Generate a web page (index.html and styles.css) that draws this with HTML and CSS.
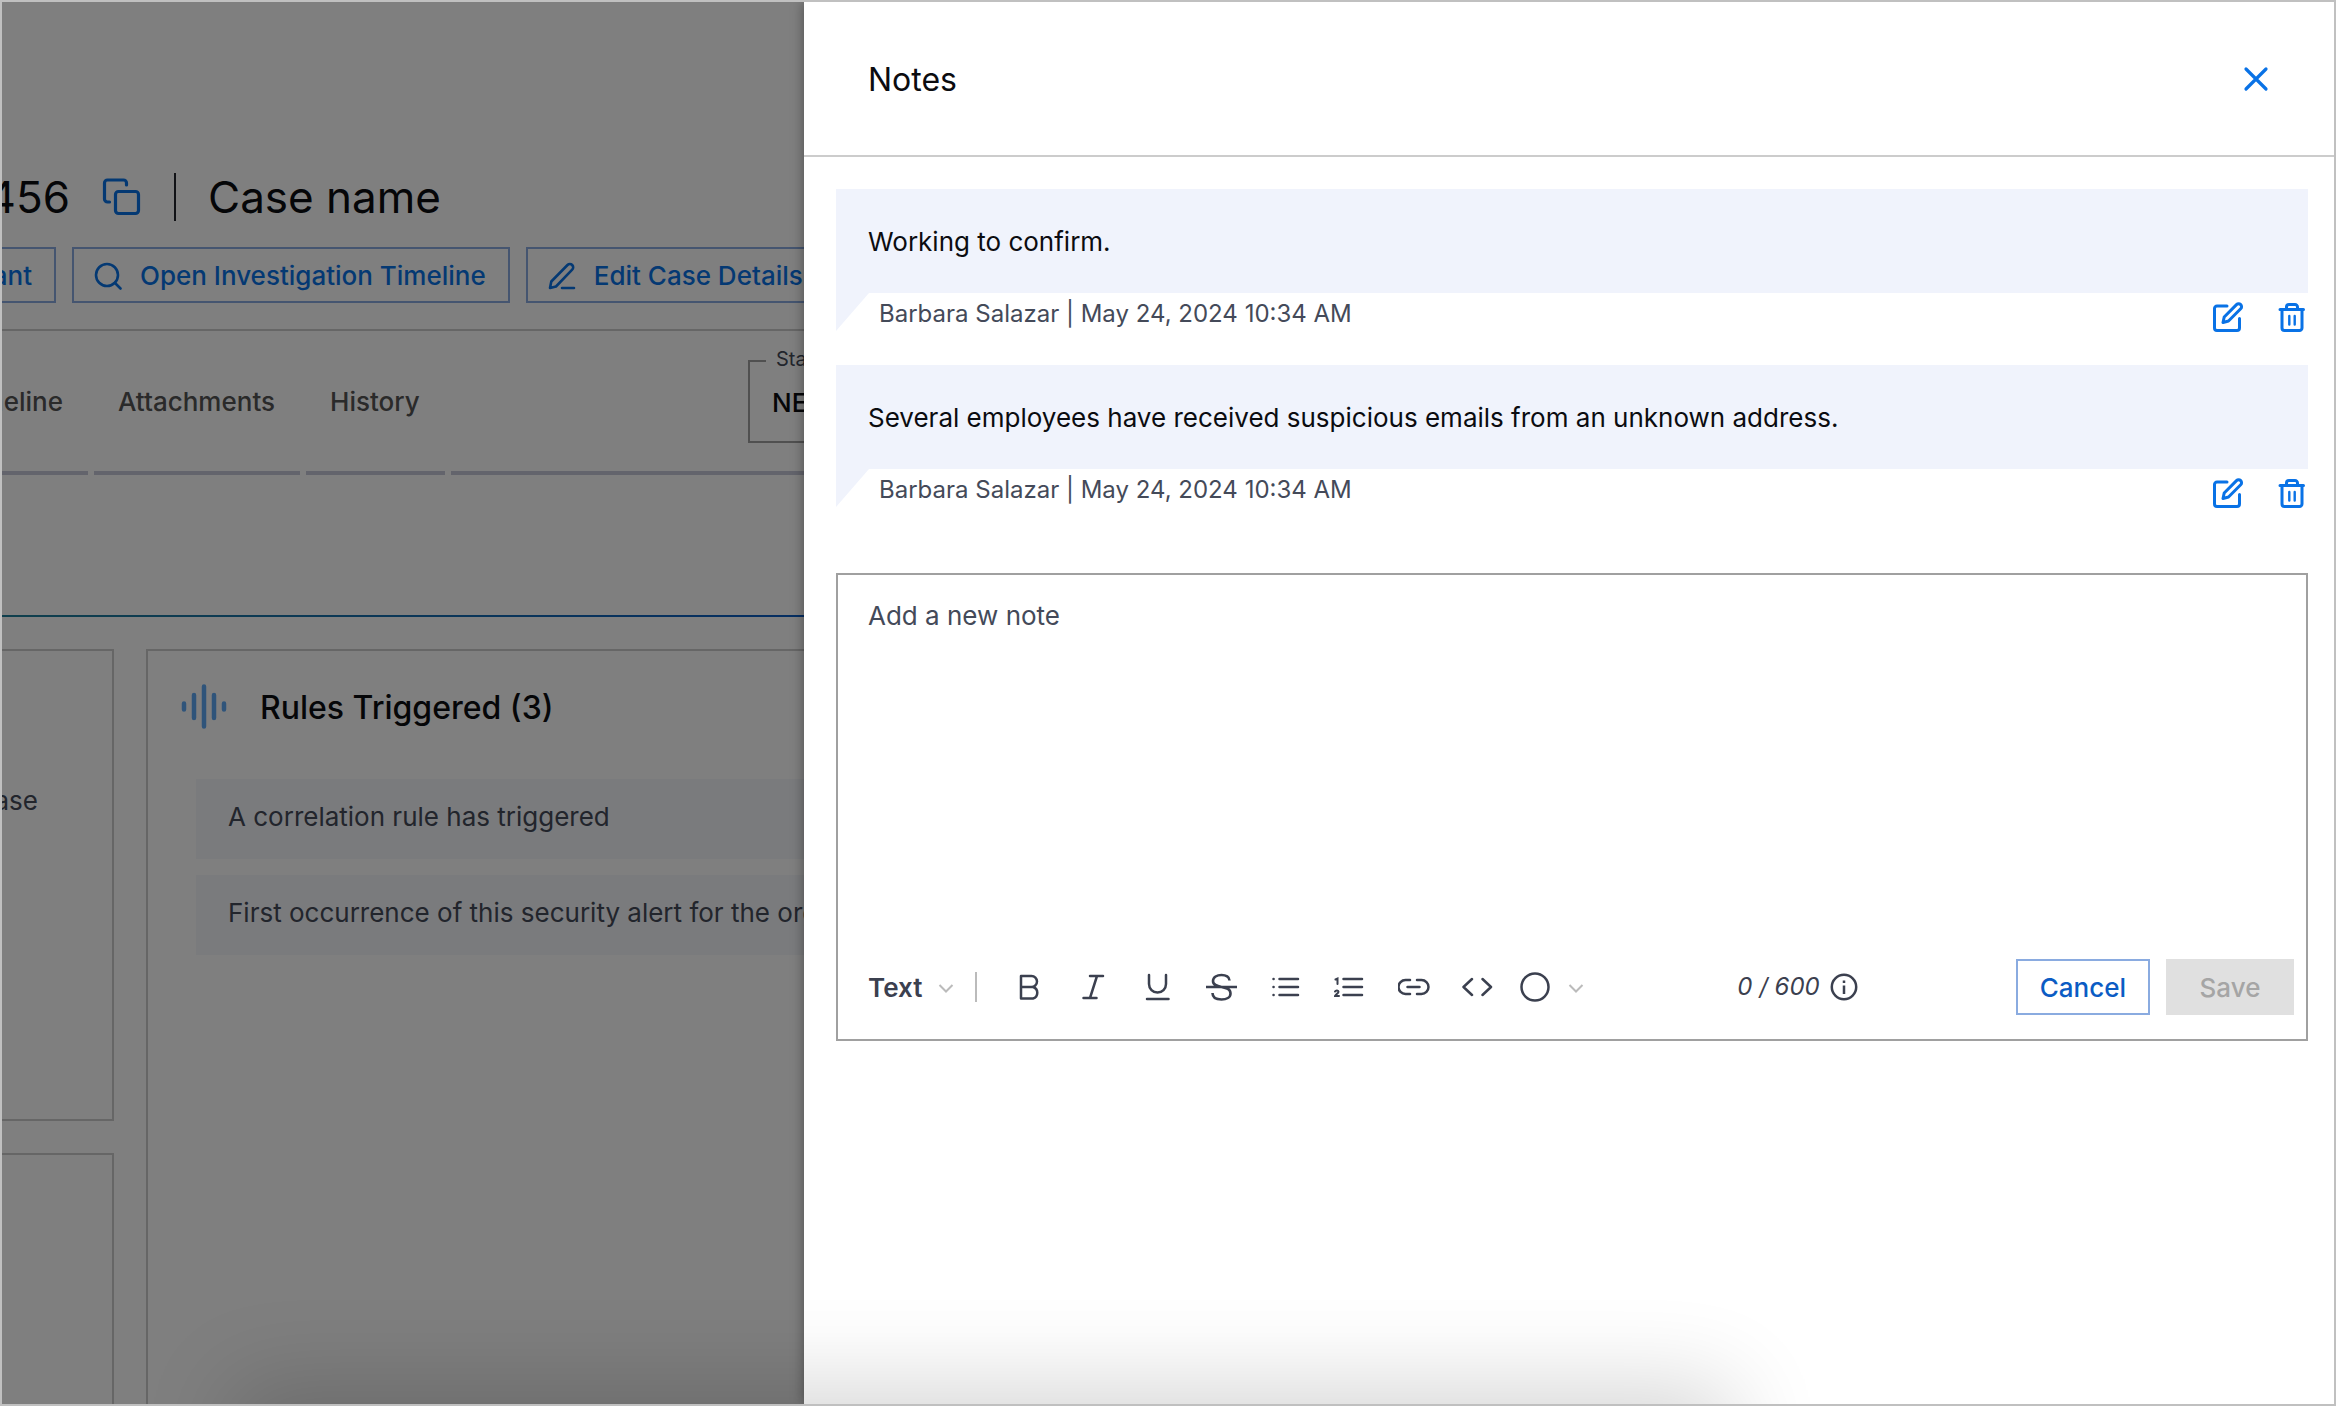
FILE: index.html
```html
<!DOCTYPE html>
<html lang="en">
<head>
<meta charset="utf-8">
<title>Case notes</title>
<link rel="stylesheet" href="styles.css">
</head>
<body>
<div class="window">
  <main class="case">
    <header class="case-header">
      <div class="case-title">
        <span class="case-id">456</span>
        <button class="icon-button" type="button" aria-label="Copy case ID">
          <svg width="40" height="40" viewBox="0 0 40 40" fill="none" stroke="currentColor" stroke-width="3.200" stroke-linecap="round" stroke-linejoin="round"><rect x="14.500" y="14.500" width="23" height="22" rx="3"/><path d="M8.500 25H6.500a3 3 0 0 1-3-3V6a3 3 0 0 1 3-3h16a3 3 0 0 1 3 3v2"/></svg>
        </button>
        <span class="title-rule"></span>
        <h1 class="case-name">Case name</h1>
      </div>
      <div class="case-actions">
        <button class="outline-button clipped-start" type="button">Assistant</button>
        <button class="outline-button" type="button">
          <svg width="28" height="28" viewBox="0 0 28 28" fill="none" stroke="currentColor" stroke-width="2.600" stroke-linecap="round"><circle cx="13" cy="13" r="11"/><path d="M21 21l5.500 5.500"/></svg>
          Open Investigation Timeline
        </button>
        <button class="outline-button" type="button">
          <svg width="28" height="28" viewBox="0 0 28 28" fill="none" stroke="currentColor" stroke-width="2.600" stroke-linecap="round" stroke-linejoin="round"><path d="M2 26l1.300-6.500L19.500 3a3.300 3.300 0 0 1 4.700 4.700L8 24.500zM14 26h12"/></svg>
          Edit Case Details
        </button>
      </div>
    </header>
    <div class="tab-row">
      <nav class="tabs">
        <a class="tab clipped-start" href="#timeline">Timeline</a>
        <a class="tab" href="#attachments">Attachments</a>
        <a class="tab" href="#history">History</a>
        <span class="tab-filler"></span>
      </nav>
      <fieldset class="status">
        <legend class="status-label">Status</legend>
        <button class="status-value" type="button">NEW</button>
      </fieldset>
    </div>
    <div class="section-line"></div>
    <div class="cards">
      <div class="side-cards">
        <section class="card side-card"><p class="side-text">Case</p></section>
        <section class="card side-card last"></section>
      </div>
      <section class="card rules">
        <h2 class="rules-title">
          <svg class="wave" width="48" height="48" viewBox="0 0 48 48" fill="none" stroke="currentColor" stroke-width="4.500" stroke-linecap="round"><path d="M4 20.500v6M14 12v23M24 3.500v40M34 12v23M44 20.500v6"/></svg>
          <span class="rules-name">Rules Triggered (3)</span>
        </h2>
        <ul class="rule-list">
          <li class="rule">A correlation rule has triggered</li>
          <li class="rule">First occurrence of this security alert for the organization</li>
        </ul>
      </section>
    </div>
  </main>
  <div class="backdrop"></div>
  <aside class="drawer" aria-label="Notes">
    <header class="drawer-header">
      <h2 class="drawer-title">Notes</h2>
      <button class="icon-button close" type="button" aria-label="Close">
        <svg width="28" height="28" viewBox="0 0 28 28" fill="none" stroke="currentColor" stroke-width="3.200" stroke-linecap="round"><path d="M4 4l20 20M24 4L4 24"/></svg>
      </button>
    </header>
    <div class="drawer-body">
      <article class="note">
        <p class="note-text">Working to confirm.</p>
        <footer class="note-footer">
          <span class="note-meta">Barbara Salazar | May 24, 2024 10:34 AM</span>
          <span class="note-actions">
            <button class="icon-button" type="button" aria-label="Edit note"><svg width="32" height="32" viewBox="0 0 32 32" fill="none" stroke="currentColor" stroke-width="3" stroke-linecap="round" stroke-linejoin="round"><path d="M15 5H5a2.500 2.500 0 0 0-2.500 2.500V27A2.500 2.500 0 0 0 5 29.500h20a2.500 2.500 0 0 0 2.500-2.500V17.500"/><path d="M11 21.500l1.200-5.500L24.500 3.600a2.900 2.900 0 0 1 4.200 4.200L16.500 20z"/></svg></button>
            <button class="icon-button" type="button" aria-label="Delete note"><svg width="32" height="32" viewBox="0 0 32 32" fill="none" stroke="currentColor" stroke-width="3" stroke-linecap="round" stroke-linejoin="round"><path d="M4 8.500h23.500M6 8.500V27A2.500 2.500 0 0 0 8.500 29.500h15a2.500 2.500 0 0 0 2.500-2.500V8.500M10.500 8V6a2.500 2.500 0 0 1 2.500-2.500h6A2.500 2.500 0 0 1 21.500 6v2"/><path stroke-width="2.400" d="M13.300 15v8.500M18.700 15v8.500"/></svg></button>
          </span>
        </footer>
      </article>
      <article class="note">
        <p class="note-text">Several employees have received suspicious emails from an unknown address.</p>
        <footer class="note-footer">
          <span class="note-meta">Barbara Salazar | May 24, 2024 10:34 AM</span>
          <span class="note-actions">
            <button class="icon-button" type="button" aria-label="Edit note"><svg width="32" height="32" viewBox="0 0 32 32" fill="none" stroke="currentColor" stroke-width="3" stroke-linecap="round" stroke-linejoin="round"><path d="M15 5H5a2.500 2.500 0 0 0-2.500 2.500V27A2.500 2.500 0 0 0 5 29.500h20a2.500 2.500 0 0 0 2.500-2.500V17.500"/><path d="M11 21.500l1.200-5.500L24.500 3.600a2.900 2.900 0 0 1 4.200 4.200L16.500 20z"/></svg></button>
            <button class="icon-button" type="button" aria-label="Delete note"><svg width="32" height="32" viewBox="0 0 32 32" fill="none" stroke="currentColor" stroke-width="3" stroke-linecap="round" stroke-linejoin="round"><path d="M4 8.500h23.500M6 8.500V27A2.500 2.500 0 0 0 8.500 29.500h15a2.500 2.500 0 0 0 2.500-2.500V8.500M10.500 8V6a2.500 2.500 0 0 1 2.500-2.500h6A2.500 2.500 0 0 1 21.500 6v2"/><path stroke-width="2.400" d="M13.300 15v8.500M18.700 15v8.500"/></svg></button>
          </span>
        </footer>
      </article>
      <form class="editor">
        <textarea class="editor-input" aria-label="New note" placeholder="Add a new note"></textarea>
        <div class="editor-bar">
          <button class="style-menu" type="button"><span class="style-name">Text</span>
            <svg class="chevron" width="16" height="16" viewBox="0 0 16 16" fill="none" stroke="currentColor" stroke-width="2"><path d="M1.500 6L8 12.500 14.500 6"/></svg>
          </button>
          <span class="bar-rule"></span>
          <div class="tools">
            <button class="tool" type="button" aria-label="Bold"><svg width="32" height="32" viewBox="0 0 32 32" fill="none" stroke="currentColor" stroke-width="2.500" stroke-linejoin="round"><path d="M7 5h10.500a5.500 5.500 0 0 1 0 11H7zM7 16h12a6 6 0 0 1 0 11.500H7z"/></svg></button>
            <button class="tool" type="button" aria-label="Italic"><svg width="32" height="32" viewBox="0 0 32 32" fill="none" stroke="currentColor" stroke-width="2.500" stroke-linecap="round"><path d="M12 5h13M5.500 27h13M19 5l-7 22"/></svg></button>
            <button class="tool" type="button" aria-label="Underline"><svg width="32" height="32" viewBox="0 0 32 32" fill="none" stroke="currentColor" stroke-width="2.500" stroke-linecap="round"><path d="M7 4v9a8.500 8.500 0 0 0 17 0V4M5 28h21.500"/></svg></button>
            <button class="tool" type="button" aria-label="Strikethrough"><svg width="32" height="32" viewBox="0 0 32 32" fill="none" stroke="currentColor" stroke-width="2.600"><path d="M0 16h31M23.500 9.500C23.500 6 20 4 15.500 4S7 6 7 10c0 4 3.500 5 8.500 6s9 2 9 6.500c0 4-4 6-9 6s-9-2-9-6.500"/></svg></button>
            <button class="tool" type="button" aria-label="Bulleted list"><svg width="32" height="32" viewBox="0 0 32 32" fill="none" stroke="currentColor" stroke-width="2.500" stroke-linecap="round"><path d="M9.500 8H28M9.500 16H28M9.500 24H28M3.500 8h.1M3.500 16h.1M3.500 24h.1"/></svg></button>
            <button class="tool" type="button" aria-label="Numbered list"><svg width="32" height="32" viewBox="0 0 32 32" fill="none" stroke="currentColor" stroke-width="2.500" stroke-linecap="round"><path d="M9.500 8H28M9.500 16H28M9.500 24H28"/><path stroke-width="2" d="M1.500 8.500L3.500 7.500V13M1 20.500c.8-1.500 3.500-1.500 3.500.3 0 1.500-2.500 2.500-3.500 4.200h4"/></svg></button>
            <button class="tool" type="button" aria-label="Link"><svg width="32" height="32" viewBox="0 0 32 32" fill="none" stroke="currentColor" stroke-width="2.500" stroke-linecap="round"><path d="M12 9H7.500a7 7 0 0 0 0 14H12M19 9h4.500a7 7 0 0 1 0 14H19M9.500 16h12"/></svg></button>
            <button class="tool" type="button" aria-label="Code"><svg width="32" height="32" viewBox="0 0 32 32" fill="none" stroke="currentColor" stroke-width="2.500" stroke-linecap="round" stroke-linejoin="round"><path d="M10 8l-8.500 8L10 24M20.500 8l8.500 8-8.500 8"/></svg></button>
          </div>
          <button class="color-menu" type="button" aria-label="Text color">
            <svg width="32" height="32" viewBox="0 0 32 32" fill="none" stroke="currentColor" stroke-width="2.500"><circle cx="16" cy="16" r="13.500"/></svg>
            <svg class="chevron" width="16" height="16" viewBox="0 0 16 16" fill="none" stroke="currentColor" stroke-width="2"><path d="M1.500 6L8 12.500 14.500 6"/></svg>
          </button>
          <span class="counter">0 / 600
            <svg width="28" height="28" viewBox="0 0 28 28" fill="none" stroke="currentColor" stroke-width="2.500"><circle cx="14" cy="14" r="12.200"/><path d="M14 12.500V21M14 7.500v2.600"/></svg>
          </span>
          <div class="editor-actions">
            <button class="outline-button cancel" type="button">Cancel</button>
            <button class="save" type="submit" disabled>Save</button>
          </div>
        </div>
      </form>
    </div>
  </aside>
  <div class="bottom-shade"></div>
</div>
</body>
</html>
```
FILE: styles.css
```css
* { box-sizing: border-box; }

body {
  margin: 0;
  font-family: Inter, "Liberation Sans", sans-serif;
  font-size: 26px;
  line-height: 32px;
  color: #0b0c10;
}

h1, h2, p, ul { margin: 0; padding: 0; }
ul { list-style: none; }
svg { display: block; flex: none; }

button, textarea {
  font: inherit;
  color: inherit;
  background: none;
  border: 0;
  padding: 0;
  margin: 0;
}

.window {
  position: relative;
  display: flex;
  height: 100vh;
  border: 2px solid #c0c0c0;
  overflow: hidden;
  background: #fff;
}

.case {
  flex: 1;
  min-width: 0;
  display: flex;
  flex-direction: column;
  white-space: nowrap;
  overflow: hidden;
}

.case-header {
  flex: none;
  padding-top: 169px;
  border-bottom: 2px solid #ccc;
}

.case-title {
  display: flex;
  align-items: center;
  height: 52px;
}

.case-id, .case-name {
  font-size: 44px;
  line-height: 52px;
  font-weight: 400;
}

.case-id {
  display: flex;
  justify-content: flex-end;
  width: 68px;
  margin-right: 31px;
}

.title-rule {
  width: 2px;
  height: 48px;
  margin: 0 32px 0 33px;
  background: #22242c;
}

.icon-button { color: #0972e6; }

.case-actions {
  display: flex;
  gap: 16px;
  margin: 24px 0 26px;
}

.outline-button {
  flex: none;
  display: flex;
  align-items: center;
  gap: 18px;
  height: 56px;
  padding: 2px 22px 0 20px;
  border: 2px solid #8aabe0;
  color: #0972e6;
  font-weight: 500;
}

.case-actions .clipped-start {
  width: 54px;
  border-left: 0;
  justify-content: flex-end;
}

.tab-row {
  flex: none;
  display: flex;
  position: relative;
  height: 144px;
}

.tabs {
  flex: 1;
  display: flex;
  gap: 6px;
}

.tab, .tab-filler {
  border-bottom: 4px solid #c6c9d8;
}

.tab {
  display: flex;
  align-items: center;
  padding: 2px 25px 0 24px;
  color: #545454;
  font-weight: 500;
  text-decoration: none;
}

.tab.clipped-start {
  width: 86px;
  justify-content: flex-end;
}

.tab-filler { flex: 1; }

.status {
  position: absolute;
  top: 16px;
  left: 746px;
  width: 260px;
  height: 96px;
  margin: 0;
  padding: 0 22px;
  border: 2px solid #a0a0a0;
}

.status-label {
  margin-left: -6px;
  padding: 0 10px 4px;
  font-size: 20px;
  line-height: 24px;
  color: #444a59;
}

.status-value {
  height: 56px;
  font-weight: 500;
}

.section-line {
  flex: none;
  height: 2px;
  margin-top: 140px;
  background: linear-gradient(90deg, #1f7f9a, #0b5cc4);
}

.cards {
  flex: 1;
  min-height: 0;
  display: flex;
  gap: 32px;
  padding-top: 32px;
}

.card { border: 2px solid #ccc; }

.side-cards {
  flex: none;
  width: 112px;
  display: flex;
  flex-direction: column;
  gap: 32px;
}

.side-card {
  flex: none;
  height: 472px;
  border-left: 0;
}

.side-card.last {
  flex: 1;
  border-bottom: 0;
}

.side-text {
  display: flex;
  justify-content: flex-end;
  width: 36px;
  margin-top: 134px;
  color: #444a59;
}

.rules {
  flex: 1;
  padding: 32px 48px;
  border-right: 0;
  border-bottom: 0;
}

.rules-title {
  display: flex;
  align-items: center;
  gap: 32px;
  height: 48px;
  margin-left: -16px;
  font-size: 32px;
  font-weight: 500;
}

.rules-name { padding-top: 2px; }

.wave { color: #5fa8f5; }

.rule-list {
  display: flex;
  flex-direction: column;
  gap: 16px;
  margin-top: 48px;
}

.rule {
  height: 80px;
  padding: 22px 32px;
  background: #f4f6fa;
  color: #444a59;
}

.backdrop {
  position: absolute;
  inset: 0;
  background: rgba(0, 0, 0, 0.5);
}

.drawer {
  position: relative;
  flex: none;
  width: calc(100% - 802px);
  background: #fff;
  box-shadow: 0 0 12px rgba(0, 0, 0, 0.4);
}

.drawer-header {
  display: flex;
  align-items: center;
  justify-content: space-between;
  height: 155px;
  padding: 0 64px;
  border-bottom: 2px solid #ccc;
}

.drawer-title {
  padding-top: 2px;
  font-size: 32px;
  font-weight: 400;
}

.drawer-body { padding: 32px 26px 32px 32px; }

.note { margin-bottom: 34px; }

.note-text {
  min-height: 104px;
  padding: 37px 32px 35px;
  background: #f0f3fc;
}

.note-footer {
  display: flex;
  justify-content: space-between;
  height: 38px;
}

.note-footer::before {
  content: "";
  width: 33px;
  height: 38px;
  background: #f0f3fc;
  clip-path: polygon(0 0, 100% 0, 0 100%);
}

.note-meta {
  flex: 1;
  padding: 5px 10px;
  font-size: 24px;
  color: #444a59;
}

.note-actions {
  display: flex;
  gap: 32px;
  padding-top: 8px;
}

.editor {
  margin-top: 66px;
  border: 2px solid #a0a0a0;
}

.editor-input {
  display: block;
  width: 100%;
  height: 368px;
  padding: 25px 30px;
  resize: none;
  outline: 0;
}

.editor-input::placeholder { color: #444a59; opacity: 1; }

.editor-bar {
  display: flex;
  align-items: center;
  height: 96px;
  padding: 0 12px 8px 30px;
  color: #3b404f;
}

.style-menu {
  display: flex;
  align-items: center;
  gap: 16px;
  font-weight: 600;
}

.style-name { padding-top: 2px; }

.chevron { color: #bbb; }

.bar-rule {
  width: 2px;
  height: 30px;
  margin: 0 37px 0 21px;
  background: #bbb;
}

.tools {
  display: flex;
  gap: 32px;
}

.color-menu {
  display: flex;
  align-items: center;
  gap: 17px;
  margin-left: 25px;
}

.counter {
  display: flex;
  align-items: center;
  gap: 10px;
  margin-left: auto;
  font-style: italic;
  font-size: 24px;
}

.editor-actions {
  display: flex;
  gap: 16px;
  margin-left: 158px;
}

.outline-button.cancel {
  padding: 2px 22px 0;
  color: #0b5cc4;
}

.save {
  width: 128px;
  height: 56px;
  padding-top: 2px;
  background: #e0e0e0;
  color: #a5a5a5;
  font-weight: 500;
}

.bottom-shade {
  position: absolute;
  top: 100%;
  left: 250px;
  width: 1460px;
  height: 120px;
  pointer-events: none;
  box-shadow: 0 0 90px 20px rgba(0, 0, 0, 0.16);
}
```
